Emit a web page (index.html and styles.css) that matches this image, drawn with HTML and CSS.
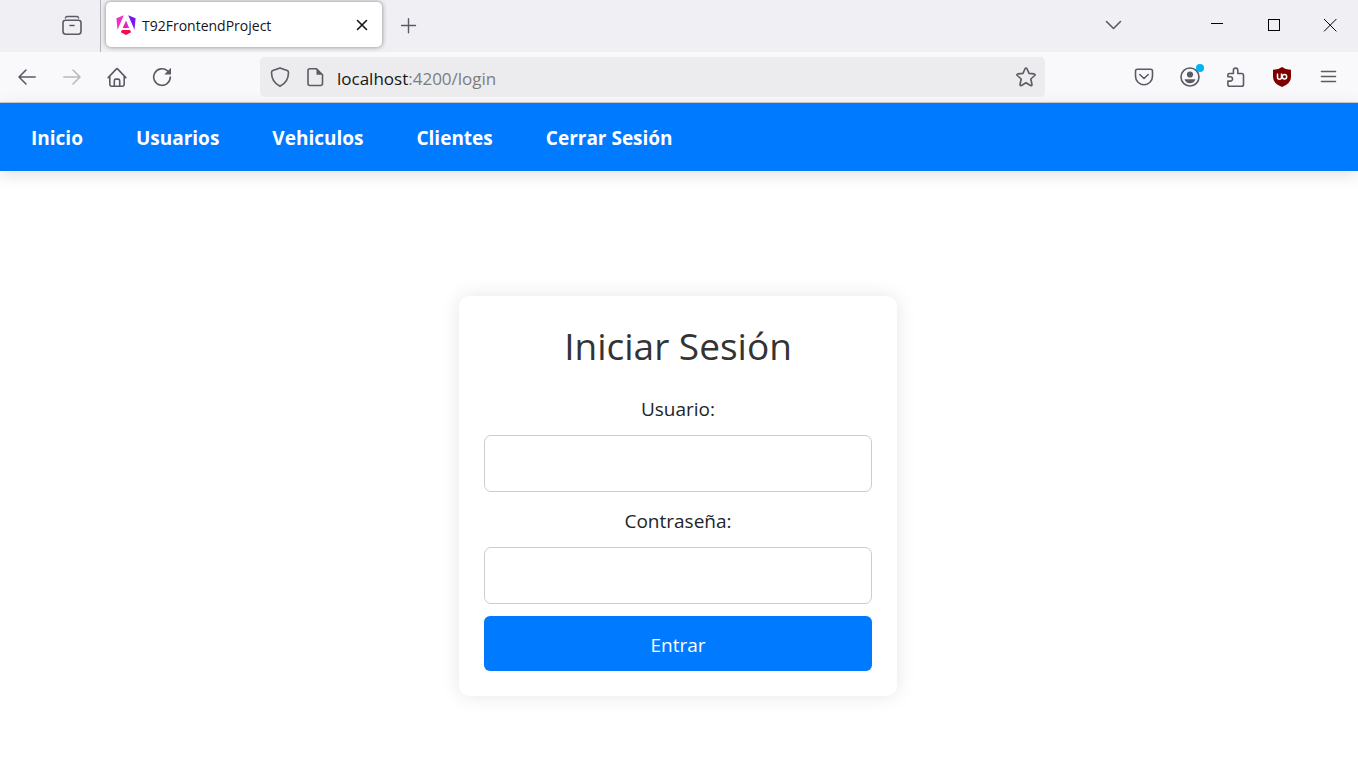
FILE: index.html
```html
<!DOCTYPE html>
<html lang="es">
<head>
<meta charset="utf-8">
<title>T92FrontendProject</title>
<link rel="stylesheet" href="styles.css">
</head>
<body>
<header class="browser">
  <div class="tab-strip">
    <div class="strip-start">
      <button class="icon-button" type="button" aria-label="Firefox View">
        <svg class="icon" width="22" height="22" viewBox="0 0 22 22"><path d="M4.500 2.800q.5-1.300 1.500-1.300h10q1 0 1.500 1.300"/><rect x="2" y="5.200" width="18" height="14" rx="2.600"/><path d="M9 10.500h4"/></svg>
      </button>
    </div>
    <div class="tab">
      <svg width="20" height="20" viewBox="0 0 20 20" aria-hidden="true">
        <defs><linearGradient id="ng" x1="0" y1="1" x2="1" y2="0"><stop offset="0" stop-color="#f0106e"/><stop offset=".5" stop-color="#e829c8"/><stop offset="1" stop-color="#b020f0"/></linearGradient></defs>
        <path fill="#ee30c8" d="M7.800.200.400 3.200l1.100 11.500z"/>
        <path fill="#7b17f2" d="m12.200.200 7.400 3-1.100 11.500z"/>
        <path fill="url(#ng)" d="M10 5.500l3.200 7.500H6.800z"/>
        <path fill="#f50a55" d="M6 15h8l1.200 2.300L10 20l-5.200-2.700z"/>
      </svg>
      <span class="tab-title">T92FrontendProject</span>
      <button class="tab-close" type="button" aria-label="Cerrar pestaña">
        <svg class="icon dark" width="12" height="12" viewBox="0 0 12 12"><path d="m1.500 1.500 9 9m0-9-9 9"/></svg>
      </button>
    </div>
    <button class="icon-button" type="button" aria-label="Nueva pestaña">
      <svg class="icon thin" width="16" height="16" viewBox="0 0 16 16"><path d="M7.500.8v14M.5 7.500h14"/></svg>
    </button>
    <div class="strip-end">
      <button class="window-button" type="button" aria-label="Listar pestañas">
        <svg class="icon" width="18" height="18" viewBox="0 0 18 18"><path d="m1.500 4.500 7 7 7-7"/></svg>
      </button>
      <div class="window-controls">
        <button class="window-button" type="button" aria-label="Minimizar"><svg class="icon sharp" width="14" height="14" viewBox="0 0 14 14"><path d="M0 4.500h12"/></svg></button>
        <button class="window-button" type="button" aria-label="Maximizar"><svg class="icon sharp" width="14" height="14" viewBox="0 0 14 14"><rect x="1.500" y=".5" width="11" height="11"/></svg></button>
        <button class="window-button" type="button" aria-label="Cerrar"><svg class="icon sharp" width="14" height="14" viewBox="0 0 14 14"><path d="m1 0 12.400 12.400m0-12.400L1 12.400"/></svg></button>
      </div>
    </div>
  </div>
  <div class="toolbar">
    <div class="tools">
      <button class="icon-button" type="button" aria-label="Atrás"><svg class="icon" width="20" height="20" viewBox="0 0 20 20"><path d="M18.200 10H2m7-7-7 7 7 7"/></svg></button>
      <button class="icon-button" type="button" aria-label="Adelante" disabled><svg class="icon" width="20" height="20" viewBox="0 0 20 20"><path d="M1.800 10H18m-7-7 7 7-7 7"/></svg></button>
      <button class="icon-button" type="button" aria-label="Inicio"><svg class="icon" width="20" height="20" viewBox="0 0 20 20"><path d="m1.200 10.600 8-8.500q.8-.8 1.600 0l8 8.500M2.800 9v8.300q0 2 2 2h10.400q2 0 2-2V9M7.300 19v-5.300q0-1.600 1.600-1.600h2.200q1.600 0 1.600 1.600V19"/></svg></button>
      <button class="icon-button" type="button" aria-label="Recargar"><svg class="icon" width="20" height="20" viewBox="0 0 20 20"><path d="M18.300 10a8.300 8.300 0 1 1-2.700-6.100"/><path class="solid" d="M19 .8v6.700h-6.700z"/></svg></button>
    </div>
    <div class="address">
      <svg class="icon" width="20" height="20" viewBox="0 0 20 20"><path d="M10 .9 17.200 3.400q1.300.5 1.300 1.900C18.500 11.500 16 16.500 10 19.200 4 16.500 1.500 11.500 1.500 5.300q0-1.400 1.300-1.900z"/></svg>
      <svg class="icon" width="20" height="20" viewBox="0 0 20 20"><path d="M11.500 1.800H5q-2 0-2 2v12.700q0 2 2 2h10.500q2 0 2-2V7.800z"/><path class="solid" d="M11.500 1.500v6.300h6.300z"/></svg>
      <div class="url"><span class="host">localhost</span>:4200/login</div>
      <button class="star" type="button" aria-label="Añadir a marcadores"><svg class="icon" width="20" height="20" viewBox="0 0 20 20"><path d="M9 1.700q1-1.400 2 0l2 4.700 5.200.5q1.500.4.500 1.600l-3.900 3.500 1.200 5.500q0 1.500-1.500 1L10 15.800l-4.500 2.700q-1.500.5-1.500-1l1.200-5.500-3.900-3.500q-1-1.200.5-1.600L7 6.400z"/></svg></button>
    </div>
    <div class="tools end">
      <button class="icon-button" type="button" aria-label="Pocket"><svg class="icon" width="20" height="20" viewBox="0 0 20 20"><path d="M3.500 2.300h13q2 0 2 2v4.900a8.500 8.500 0 0 1-17 0V4.300q0-2 2-2zM5.800 7.500 10 11.500l4.200-4"/></svg></button>
      <button class="icon-button" type="button" aria-label="Cuenta"><span class="badge-host"><svg class="icon" width="20" height="20" viewBox="0 0 20 20"><circle cx="10" cy="10" r="9"/><circle class="solid" cx="10" cy="7.500" r="3.100"/><path class="solid" d="M4.500 12.300h11q-1.300 4-5.500 4t-5.500-4z"/></svg><span class="badge"></span></span></button>
      <button class="icon-button" type="button" aria-label="Extensiones"><svg class="icon" width="20" height="20" viewBox="0 0 20 20"><path d="M3.700 19.200q-1.800 0-1.800-1.800v-3.300h2.400a2.200 2.200 0 0 0 0-4.400H1.900V8q0-1.500 1.500-1.500h4V3.300a2.200 2.200 0 0 1 4.400 0v3.200h4q1.700 0 1.700 1.700v9.200q0 1.800-1.800 1.800z"/></svg></button>
      <button class="icon-button" type="button" aria-label="uBlock Origin"><svg width="20" height="20" viewBox="0 0 20 20"><path fill="#800000" d="M10 0q4 3 9 2.800V10q0 6.500-9 10-9-3.500-9-10V2.800Q6 3 10 0z"/><path d="M5.500 6.500v3.700a2 2 0 0 0 4 0V6.500" fill="none" stroke="#fff" stroke-width="1.500"/><circle cx="12.500" cy="9.700" r="2.200" fill="none" stroke="#fff" stroke-width="1.500"/></svg></button>
      <button class="icon-button" type="button" aria-label="Menú"><svg class="icon" width="20" height="20" viewBox="0 0 20 20"><path d="M3.500 4.500h14M3.500 9.500h14M3.500 14.500h14"/></svg></button>
    </div>
  </div>
</header>
<nav class="site-nav">
  <a href="#">Inicio</a>
  <a href="#">Usuarios</a>
  <a href="#">Vehiculos</a>
  <a href="#">Clientes</a>
  <a href="#">Cerrar Sesión</a>
</nav>
<main class="page">
  <form class="card">
    <h1>Iniciar Sesión</h1>
    <label for="user">Usuario:</label>
    <input id="user" type="text">
    <label for="pass">Contraseña:</label>
    <input id="pass" type="password">
    <button class="submit" type="submit">Entrar</button>
  </form>
</main>
</body>
</html>
```
FILE: styles.css
```css
* { box-sizing: border-box; }
body {
  margin: 0;
  background: #fff;
  color: #212529;
  font-family: "Segoe UI", "Open Sans", "Noto Sans", sans-serif;
}
button {
  border: 0;
  padding: 0;
  background: none;
  color: inherit;
  font: inherit;
}
svg { display: block; flex: none; }
.icon {
  fill: none;
  stroke: #5b5b66;
  stroke-width: 1.6;
  stroke-linecap: round;
  stroke-linejoin: round;
}
.icon .solid { fill: #5b5b66; stroke: none; }
.icon.thin { stroke-width: 1.4; }
.icon.dark { stroke: #15141a; }
.icon.sharp { stroke: #000; stroke-width: 1; stroke-linecap: butt; stroke-linejoin: miter; }

.tab-strip {
  display: flex;
  align-items: center;
  height: 52px;
  background: #f0eff4;
}
.strip-start {
  display: flex;
  align-items: center;
  align-self: stretch;
  padding-left: 49px;
  padding-right: 6px;
  margin-right: 5px;
  border-right: 1px solid #b4b3b9;
}
.icon-button {
  display: flex;
  align-items: center;
  justify-content: center;
  width: 45px;
  height: 40px;
}
.icon-button:disabled { opacity: .4; }
.tab {
  display: flex;
  align-items: center;
  gap: 6px;
  width: 276px;
  height: 45px;
  margin-bottom: 3px;
  padding: 0 11px 0 10px;
  border-radius: 5px;
  background: #fff;
  box-shadow: 0 0 5px rgba(0, 0, 0, .45);
}
.tab + .icon-button { margin-left: 4px; }
.tab-title { flex: 1; padding-top: 2px; color: #15141a; font-size: 14px; }
.tab-close { display: flex; padding: 3px; }
.strip-end { display: flex; gap: 48px; margin-left: auto; }
.window-controls { display: flex; }
.window-button {
  display: flex;
  align-items: center;
  justify-content: center;
  width: 56px;
  height: 48px;
}

.toolbar {
  display: flex;
  align-items: center;
  justify-content: space-between;
  height: 51px;
  padding: 0 7px 0 4px;
  border-bottom: 1px solid #cccccf;
  background: #f9f9fb;
}
.tools { display: flex; }
.tools.end .icon-button { width: 46px; }
.address {
  display: flex;
  align-items: center;
  flex: 0 1 785px;
  gap: 15px;
  height: 40px;
  padding: 0 9px 0 10px;
  border-radius: 5px;
  background: #ececee;
}
.url { flex: 1; margin-left: -3px; padding-top: 2px; color: #7d7d80; font-size: 17px; }
.host { color: #15141a; }
.badge-host { position: relative; }
.badge {
  position: absolute;
  top: -3px;
  right: -4px;
  width: 8px;
  height: 8px;
  border-radius: 50%;
  background: #00b3f4;
}

.site-nav {
  display: flex;
  align-items: center;
  gap: 53px;
  height: 68px;
  padding: 2px 31px 0;
  background: #007bff;
  box-shadow: 0 4px 16px rgba(0, 0, 0, .12);
}
.site-nav a {
  color: #fff;
  font-size: 19px;
  font-weight: 700;
  text-decoration: none;
}

.page {
  display: flex;
  justify-content: center;
  padding: 125px 22px 60px 20px;
}
.card {
  display: flex;
  flex-direction: column;
  width: 100%;
  max-width: 438px;
  padding: 25px;
  border-radius: 10px;
  background: #fff;
  box-shadow: 0 0 20px rgba(0, 0, 0, .1);
  text-align: center;
}
h1 {
  margin: 0 0 24px;
  color: #333;
  font-size: 37px;
  font-weight: 400;
  line-height: 50px;
}
label { margin-bottom: 12px; font-size: 19px; line-height: 28px; }
input {
  width: 100%;
  height: 57px;
  margin-bottom: 15px;
  padding: 12px;
  border: 1px solid #ccc;
  border-radius: 7px;
  font: inherit;
  font-size: 19px;
}
.submit {
  height: 55px;
  margin-top: -3px;
  padding-top: 2px;
  border-radius: 6px;
  background: #007bff;
  color: #fff;
  font-size: 19px;
}
```
